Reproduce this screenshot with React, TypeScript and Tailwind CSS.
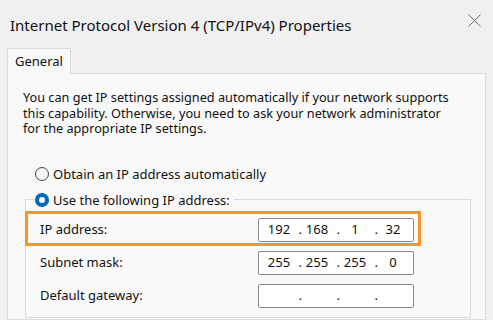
import React from 'react';

const font = { fontFamily: '"Noto Sans", "Open Sans", sans-serif' };

const Radio: React.FC<{ checked?: boolean; label: string }> = ({ checked, label }) => (
  <div className="flex items-center h-[16px]">
    {checked ? (
      <span className="w-[14px] h-[14px] rounded-full bg-[#0067c0] flex items-center justify-center">
        <span className="w-[6px] h-[6px] rounded-full bg-white" />
      </span>
    ) : (
      <span className="w-[14px] h-[14px] rounded-full border border-[#454545] bg-[#f5f5f5]" />
    )}
    <span className="ml-[4px] text-[13px] text-[#111] leading-[16px]">{label}</span>
  </div>
);

const IpField: React.FC<{ parts: string[] }> = ({ parts }) => (
  <div className="w-[156px] h-[24px] bg-white border border-[#8a8a8a] rounded-[2px] flex items-center pl-[5px] text-[13px] text-[#111]">
    {parts.map((p, i) => (
      <React.Fragment key={i}>
        <span className="w-[30px] text-center">{p}</span>
        {i < 3 && <span className="w-[8px] text-right">.</span>}
      </React.Fragment>
    ))}
  </div>
);

const Row: React.FC<{ label: string; parts: string[]; highlight?: boolean }> = ({ label, parts, highlight }) => (
  <div className="relative flex items-center">
    <span className="w-[223px] pl-[5px] text-[13px] text-[#111]">{label}</span>
    <IpField parts={parts} />
    {highlight && (
      <div className="absolute -left-[10px] -top-[7px] -bottom-[4px] right-[49px] border-[3px] border-[#f5962a] pointer-events-none" />
    )}
  </div>
);

export default function App() {
  return (
    <div className="w-[493px] h-[320px] bg-[#f0f0f0] overflow-hidden flex flex-col" style={font}>
      <div className="h-[48px] flex items-start justify-between pl-[10px] pr-[12px] pt-[15px]">
        <span className="text-[15px] leading-[20px] text-[#111]">Internet Protocol Version 4 (TCP/IPv4) Properties</span>
        <svg width="13" height="13" viewBox="0 0 13 13" className="mt-[-1px]">
          <path d="M0.5 0.5L12.5 12.5M12.5 0.5L0.5 12.5" stroke="#707070" strokeWidth="1" />
        </svg>
      </div>

      <div className="pl-[7px]">
        <div className="w-[64px] h-[26px] -mb-px relative bg-[#f9f9f9] border border-b-0 border-[#dcdcdc] flex items-center justify-center text-[13px] text-[#111]">
          General
        </div>
      </div>

      <div className="ml-[7px] w-[479px] flex-1 bg-[#f9f9f9] border border-[#dcdcdc] pt-[16px]">
        <p className="pl-[15px] text-[12.7px] leading-[15.5px] text-[#111]">
          You can get IP settings assigned automatically if your network supports
          <br />
          this capability. Otherwise, you need to ask your network administrator
          <br />
          for the appropriate IP settings.
        </p>

        <div className="mt-[29px] pl-[27px]">
          <Radio label="Obtain an IP address automatically" />
        </div>

        <fieldset className="mt-[10px] ml-[17px] w-[446px] border border-[#dcdcdc] pl-[9px] pb-[9px]">
          <legend className="pr-[4px]">
            <Radio checked label="Use the following IP address:" />
          </legend>
          <div className="mt-[10px] flex flex-col gap-[9px]">
            <Row label="IP address:" parts={['192', '168', '1', '32']} highlight />
            <Row label="Subnet mask:" parts={['255', '255', '255', '0']} />
            <Row label="Default gateway:" parts={['', '', '', '']} />
          </div>
        </fieldset>
      </div>
    </div>
  );
}
